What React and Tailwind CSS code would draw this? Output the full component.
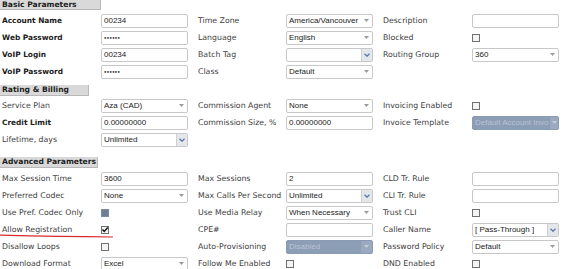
const lbl = "font-['DejaVu_Sans',sans-serif] text-[7.8px] text-[#404040] whitespace-nowrap pl-[2px]";
const lblBold = "font-['DejaVu_Sans',sans-serif] text-[7.4px] font-bold text-[#1a1a1a] whitespace-nowrap pl-[2px]";
const field = "font-['Liberation_Sans',Arial,sans-serif] text-[8px] text-[#222] whitespace-nowrap overflow-hidden";

function Arrow() {
  return (
    <svg width="5" height="3" viewBox="0 0 5 3" className="shrink-0">
      <polygon points="0,0 5,0 2.5,3" fill="#9a9a9a" />
    </svg>
  );
}

function TextBox({ value = "", muted = false }) {
  return (
    <div className={`flex h-[14px] w-[87px] items-center rounded-[2px] border border-[#c8c8c8] bg-white px-[2px] ${field} ${muted ? "text-[#9a9a9a]" : ""}`}>
      {value}
    </div>
  );
}

function Password() {
  return (
    <div className="flex h-[14px] w-[87px] items-center rounded-[2px] border border-[#c8c8c8] bg-white px-[2px]">
      <span className="text-[4px] leading-none tracking-[0.3px] text-[#111]">●●●●●●</span>
    </div>
  );
}

function Select({ value }) {
  return (
    <div className={`flex h-[14px] w-[87px] items-center justify-between rounded-[2px] border border-[#c8c8c8] bg-white pl-[2px] pr-[3px] ${field}`}>
      <span>{value}</span>
      <Arrow />
    </div>
  );
}

function Combo({ value = "" }) {
  return (
    <div className={`flex h-[14px] w-[87px] overflow-hidden rounded-[2px] border border-[#c8c8c8] bg-white ${field}`}>
      <span className="flex flex-1 items-center px-[2px]">{value}</span>
      <span className="flex w-[11px] items-center justify-center border-l border-[#d0d0d0] bg-[#e3e6eb]">
        <svg width="6" height="4" viewBox="0 0 6 4">
          <polyline points="0.5,0.8 3,3.2 5.5,0.8" fill="none" stroke="#5a78a8" strokeWidth="1.3" />
        </svg>
      </span>
    </div>
  );
}

function DisabledSelect({ value }) {
  return (
    <div className={`flex h-[14px] w-[87px] overflow-hidden rounded-[2px] border border-[#8a9bb3] bg-[#8c9db6] ${field}`}>
      <span className="flex flex-1 items-center px-[2px] text-[#b9c4d4]">{value}</span>
      <span className="flex w-[11px] items-center justify-center bg-[#9aa9bf]">
        <svg width="5" height="3" viewBox="0 0 5 3">
          <polygon points="0,0 5,0 2.5,3" fill="#c3ccd9" />
        </svg>
      </span>
    </div>
  );
}

function Check({ checked = false, filled = false }) {
  if (filled) {
    return <div className="h-[8px] w-[8px] border border-[#7d8ba0] bg-[#6d7e95]" />;
  }
  return (
    <div className="relative h-[8px] w-[8px] border border-[#707070] bg-[#f4f4f4]">
      {checked && (
        <svg width="8" height="8" viewBox="0 0 8 8" className="absolute left-[-1px] top-[-1px]">
          <polyline points="1.5,3.5 3.2,5.5 6.8,1.5" fill="none" stroke="#111" strokeWidth="1.4" />
        </svg>
      )}
    </div>
  );
}

function Header({ title, w, h = "h-[11px]" }) {
  return (
    <div className={`flex ${h} ${w} items-center border-r border-b border-[#b8b8b8] bg-[#d9d9d9] pl-[2px] font-['DejaVu_Sans',sans-serif] text-[7.6px] font-bold text-[#1e1e1e] whitespace-nowrap`}>
      {title}
    </div>
  );
}

function Row({ cells }) {
  return (
    <div className="grid h-[17px] grid-cols-[101px_95px_90px_95px_91px_110px] items-center">
      {cells}
    </div>
  );
}

const L = ({ children, bold }) => <div className={bold ? lblBold : lbl}>{children}</div>;

export default function App() {
  return (
    <div className="h-[269px] w-[582px] overflow-hidden bg-white">
      <Header title="Basic Parameters" w="w-[101px]" h="h-[10px]" />
      <div className="pt-[2px]">
        <Row cells={[<L bold key="a">Account Name</L>, <TextBox key="b" value="00234" />, <L key="c">Time Zone</L>, <Select key="d" value="America/Vancouver" />, <L key="e">Description</L>, <TextBox key="f" />]} />
        <Row cells={[<L bold key="a">Web Password</L>, <Password key="b" />, <L key="c">Language</L>, <Select key="d" value="English" />, <L key="e">Blocked</L>, <Check key="f" />]} />
        <Row cells={[<L bold key="a">VoIP Login</L>, <TextBox key="b" value="00234" />, <L key="c">Batch Tag</L>, <Combo key="d" />, <L key="e">Routing Group</L>, <Select key="f" value="360" />]} />
        <Row cells={[<L bold key="a">VoIP Password</L>, <Password key="b" />, <L key="c">Class</L>, <Select key="d" value="Default" />, <div key="e" />, <div key="f" />]} />
      </div>

      <div className="mt-[5px]">
        <Header title="Rating & Billing" w="w-[89px]" />
      </div>
      <div className="pt-[1px]">
        <Row cells={[<L key="a">Service Plan</L>, <Select key="b" value="Aza (CAD)" />, <L key="c">Commission Agent</L>, <Select key="d" value="None" />, <L key="e">Invoicing Enabled</L>, <Check key="f" />]} />
        <Row cells={[<L bold key="a">Credit Limit</L>, <TextBox key="b" value="0.00000000" />, <L key="c">Commission Size, %</L>, <TextBox key="d" value="0.00000000" muted />, <L key="e">Invoice Template</L>, <DisabledSelect key="f" value="Default Account Invo" />]} />
        <Row cells={[<L key="a">Lifetime, days</L>, <Combo key="b" value="Unlimited" />, <div key="c" />, <div key="d" />, <div key="e" />, <div key="f" />]} />
      </div>

      <div className="mt-[9px]">
        <Header title="Advanced Parameters" w="w-[98px]" />
      </div>
      <div className="pt-[2px]">
        <Row cells={[<L key="a">Max Session Time</L>, <TextBox key="b" value="3600" />, <L key="c">Max Sessions</L>, <TextBox key="d" value="2" />, <L key="e">CLD Tr. Rule</L>, <TextBox key="f" />]} />
        <Row cells={[<L key="a">Preferred Codec</L>, <Select key="b" value="None" />, <L key="c">Max Calls Per Second</L>, <Combo key="d" value="Unlimited" />, <L key="e">CLI Tr. Rule</L>, <TextBox key="f" />]} />
        <Row cells={[<L key="a">Use Pref. Codec Only</L>, <Check key="b" filled />, <L key="c">Use Media Relay</L>, <Select key="d" value="When Necessary" />, <L key="e">Trust CLI</L>, <Check key="f" />]} />
        <Row
          cells={[
            <div key="a" className="relative">
              <L>Allow Registration</L>
              <svg width="114" height="4" viewBox="0 0 114 4" className="absolute left-0 top-[10px]">
                <path d="M0,1.2 Q60,2.6 113,3" fill="none" stroke="#d8282e" strokeWidth="1.2" />
              </svg>
            </div>,
            <Check key="b" checked />,
            <L key="c">CPE#</L>,
            <TextBox key="d" />,
            <L key="e">Caller Name</L>,
            <Combo key="f" value="[ Pass-Through ]" />,
          ]}
        />
        <Row cells={[<L key="a">Disallow Loops</L>, <Check key="b" />, <L key="c">Auto-Provisioning</L>, <DisabledSelect key="d" value="Disabled" />, <L key="e">Password Policy</L>, <Select key="f" value="Default" />]} />
        <Row cells={[<L key="a">Download Format</L>, <Select key="b" value="Excel" />, <L key="c">Follow Me Enabled</L>, <Check key="d" />, <L key="e">DND Enabled</L>, <Check key="f" />]} />
      </div>
    </div>
  );
}
